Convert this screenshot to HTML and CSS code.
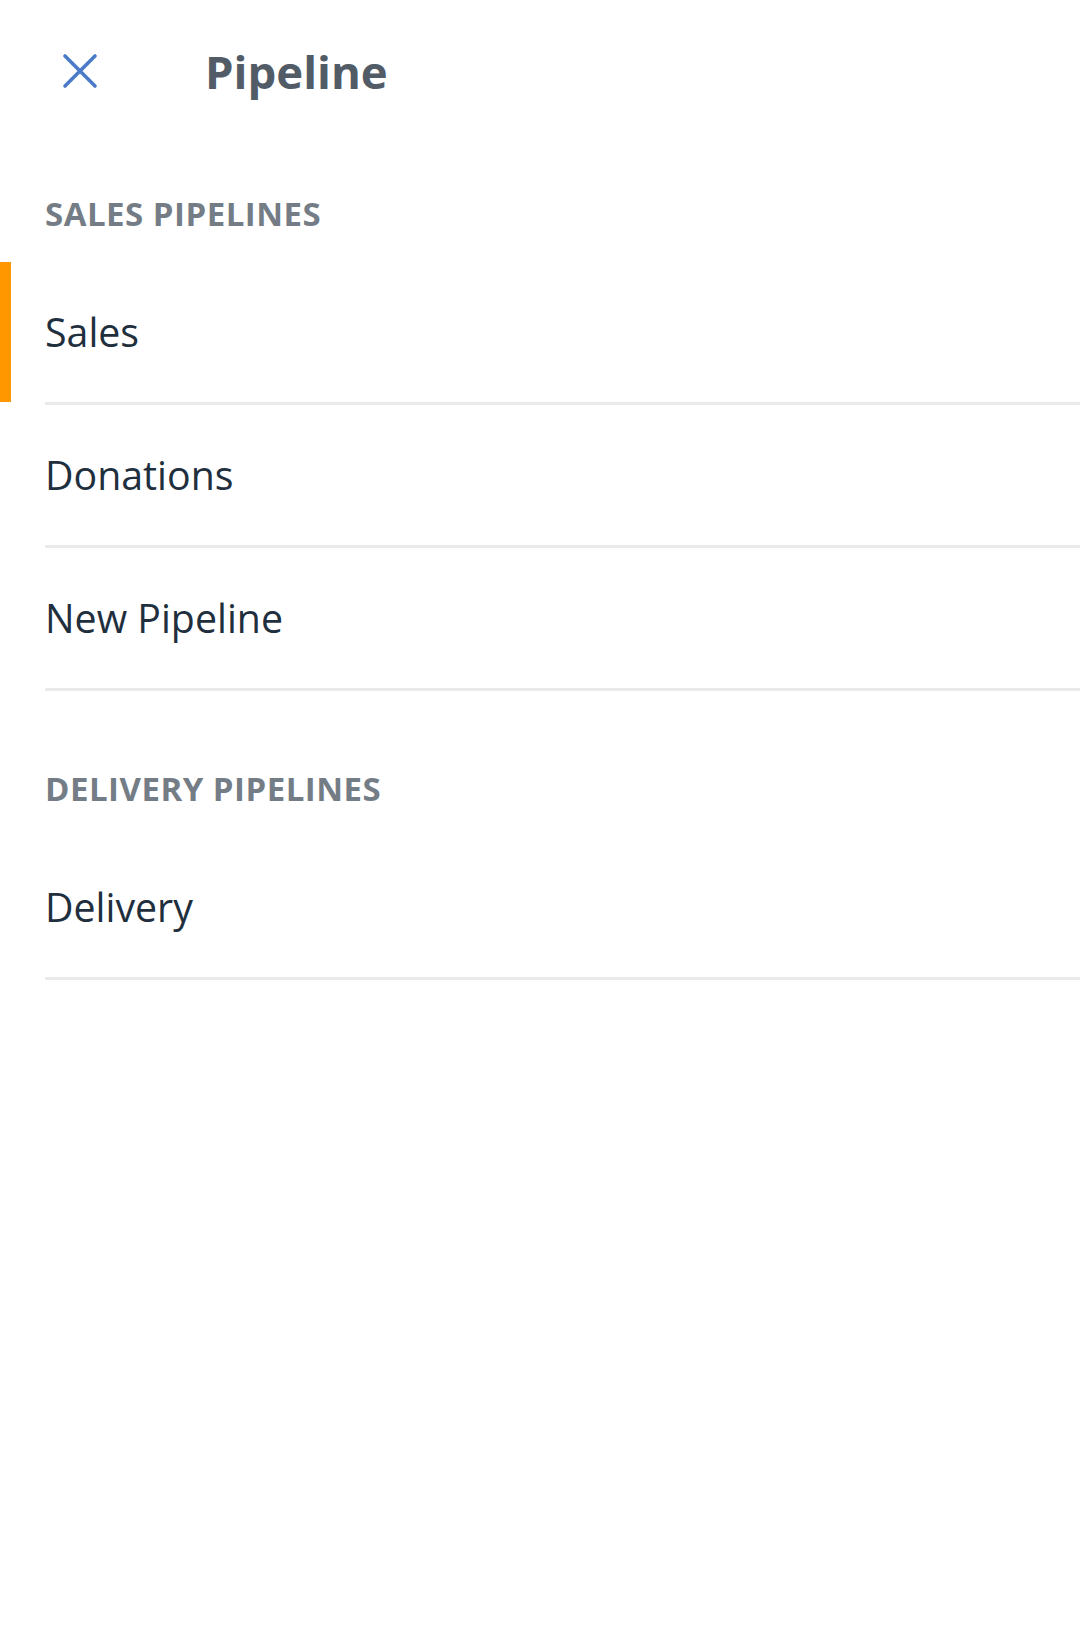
FILE: index.html
```html
<!DOCTYPE html>
<html lang="en">
<head>
    <meta charset="UTF-8">
    <meta name="viewport" content="width=device-width, initial-scale=1.0">
    <title>Pipeline</title>
    <link rel="stylesheet" href="styles.css">
</head>
<body>
<div class="wrapper">
    <header class="topBar">
        <button class="btnClose" aria-label="Close">
            <svg width="36" height="36" viewBox="0 0 36 36">
                <path d="M3 3 L33 33 M33 3 L3 33" stroke="#4b7bc8" stroke-width="3.6" stroke-linecap="round" fill="none"/>
            </svg>
        </button>
        <span id="pageTitle">Pipeline</span>
    </header>

    <section class="group">
        <h2 class="group-title">SALES PIPELINES</h2>
        <ul class="pipeList">
            <li class="pipe active"><span class="pipe-item">Sales</span></li>
            <li class="pipe"><span class="pipe-item">Donations</span></li>
            <li class="pipe"><span class="pipe-item">New Pipeline</span></li>
        </ul>
    </section>

    <section class="group">
        <h2 class="group-title">DELIVERY PIPELINES</h2>
        <ul class="pipeList">
            <li class="pipe"><span class="pipe-item">Delivery</span></li>
        </ul>
    </section>
</div>
</body>
</html>
```

FILE: styles.css
```css
body{
    margin: 0;
    background-color: #fff;
    font-family: "Open Sans", "Noto Sans", sans-serif;
}
.wrapper{
    width: 1080px;
}
/*顶部栏*/
.topBar{
    display: flex;
    align-items: center;
    height: 142px;
}
.btnClose{
    display: flex;
    align-items: center;
    justify-content: center;
    width: 60px;
    height: 60px;
    margin-left: 50px;
    padding: 0;
    border: none;
    background: none;
    outline: none;
}
#pageTitle{
    margin-left: 95px;
    font-size: 45.5px;
    font-weight: 700;
    color: #525c67;
}
/*分组*/
.group{
    margin-top: 52px;
}
.group + .group{
    margin-top: 78px;
}
.group-title{
    margin: 0 0 28px 45px;
    font-size: 33px;
    line-height: 40px;
    font-weight: 700;
    letter-spacing: 0.5px;
    color: #747d86;
}
.pipeList{
    list-style: none;
    margin: 0;
    padding: 0;
}
.pipe{
    padding-left: 45px;
}
.pipe.active{
    background: linear-gradient(#ff9800, #ff9800) no-repeat 0 0 / 11px 140px;
}
/*列表项*/
.pipe-item{
    display: flex;
    align-items: center;
    height: 140px;
    border-bottom: 3px solid #e9eaeb;
    font-size: 39.3px;
    color: #1f2f3e;
}
```
